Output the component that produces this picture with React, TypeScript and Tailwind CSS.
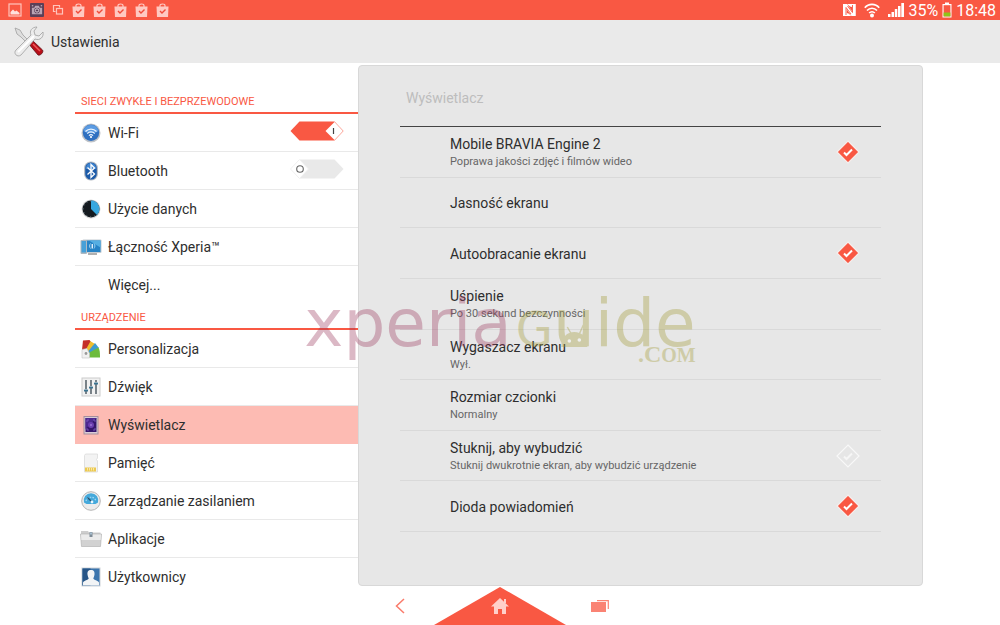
import { useState } from "react";
import type { ReactNode } from "react";
import clsx from "clsx";

interface SidebarItem {
  id: string;
  label: string;
  icon?: ReactNode;
  toggle?: boolean;
}

interface DisplayOption {
  id: string;
  title: string;
  summary?: string;
  checkable?: boolean;
}

/* ---------- Status bar icons ---------- */

function PictureIcon() {
  return (
    <svg width="14" height="14" viewBox="0 0 14 14">
      <rect x="1" y="1" width="12" height="12" fill="none" stroke="#ffc4bc" strokeWidth="1.2" />
      <path d="M2.500 11.500V9l2.500-2.500 2 2 1.500-1 3 2.500v1.500z" fill="#ffe0dc" />
    </svg>
  );
}

function CameraIcon() {
  return (
    <svg width="14" height="14" viewBox="0 0 15 15">
      <rect width="15" height="15" rx="1" fill="#5b3f58" />
      <path d="M2 5h2.500l1-2h4l1 2H13v7H2z" fill="#b9a3b3" />
      <circle cx="7.500" cy="8" r="3" fill="#5b3f58" />
      <circle cx="7.500" cy="8" r="1.800" fill="none" stroke="#e5d6df" />
      <path d="M2 3h1.500M11.500 3H13" stroke="#e5d6df" />
    </svg>
  );
}

function WindowsIcon() {
  return (
    <svg width="12" height="12" viewBox="0 0 12 12" fill="none" stroke="#ffc4bc" strokeWidth="1.200">
      <path d="M3.500 7.500h-2v-6h6v2" />
      <rect x="4.500" y="4.500" width="6" height="5.500" />
    </svg>
  );
}

function BagIcon() {
  return (
    <svg width="13" height="14" viewBox="0 0 13 14">
      <path d="M4 4V2.500C4 1.500 5 1 6.500 1S9 1.500 9 2.500V4" fill="none" stroke="#ffc9c2" strokeWidth="1.200" />
      <path d="M.5 3.500h12L12 14H1z" fill="#ffc9c2" />
      <path d="M4 8l2 2 3.500-3.500" fill="none" stroke="#f04a38" strokeWidth="1.400" />
    </svg>
  );
}

function NfcIcon() {
  return (
    <svg width="13" height="14" viewBox="0 0 13 14">
      <path d="M0 1h4l5 7V1h3.500v12h-4l-5-7v7H0z" fill="#fff" />
      <path d="M4 1h8.500v12H9V4L7 3.500zM0 1h3.500v9l2 .5 3 2.500H0z" fill="#fff" />
      <path d="M3 12V4.500l5 6.500M9.500 2v7.500L4.500 3" fill="none" stroke="#f95843" strokeWidth=".9" />
    </svg>
  );
}

function WifiStatusIcon() {
  return (
    <svg width="16" height="15" viewBox="0 0 16 15" fill="none" stroke="#fff" strokeWidth="1.700">
      <path d="M.8 4.800C4.500.3 11.500.3 15.200 4.800" />
      <path d="M3 7.500c2.800-3 7.200-3 10 0" />
      <path d="M5.200 10c1.600-1.700 4-1.700 5.600 0" />
      <circle cx="8" cy="12.600" r="2" fill="#fff" stroke="none" />
    </svg>
  );
}

function SignalIcon() {
  return (
    <svg width="16" height="14" viewBox="0 0 16 14" fill="#fff">
      <path d="M0 11h2.500v3H0zM3.500 9H6v5H3.500zM6.800 6h2.500v8H6.800zM10 3h2.500v11H10zM13.300 0H16v14h-2.700z" />
    </svg>
  );
}

function BatteryIcon() {
  return (
    <svg width="10" height="16" viewBox="0 0 10 16">
      <path d="M3 .5h4V2h2.500v13.500h-9V2H3z" fill="#fff" />
      <path d="M1.600 3.200h6.800v11.200H1.600z" fill="#f95843" />
      <path d="M1.600 10.500h6.800v3.900H1.600z" fill="#8fc31a" />
    </svg>
  );
}

/* ---------- Settings icons ---------- */

function ToolsIcon() {
  return (
    <svg width="32" height="32" viewBox="0 0 32 32">
      <path d="M2 2l5 2 3 5 8 8-2 2-8-8-4-3z" fill="#dedede" stroke="#a0a0a0" strokeWidth=".8" />
      <path d="M17 17l3-2 9.500 9c1.500 2-2 6-4.500 5l-7.500-9z" fill="#b80f18" stroke="#5e1015" strokeWidth=".8" />
      <path d="M20 18l7 7" stroke="#ef5a5a" strokeWidth="1.500" />
      <path
        d="M24 1c-5 0-8 4-6 8L3 24c-3 3 1 8 5 5l14-16c5 2 9-2 8-7l-4 4-4-1-1-4z"
        fill="#ececec"
        stroke="#a0a0a0"
        strokeWidth=".8"
      />
      <path d="M5 26L21 10" stroke="#fff" strokeWidth="2" />
    </svg>
  );
}

function WifiIcon() {
  return (
    <svg width="20" height="20" viewBox="0 0 20 20">
      <circle cx="10" cy="10" r="9.500" fill="#bfc3c8" />
      <circle cx="10" cy="9.800" r="8.200" fill="#2f70c0" />
      <path d="M2.500 8a7.700 7.700 0 0 1 15 0c-4 3-11 3-15 0z" fill="#5b9be2" />
      <g fill="none" stroke="#eaf4ff" strokeWidth="1.300">
        <path d="M4.500 8.500c3-3.300 8-3.300 11 0M6.300 10.600c2-2.200 5.400-2.200 7.400 0M8 12.600c1.200-1.200 2.800-1.200 4 0" />
      </g>
      <circle cx="10" cy="14" r="1.100" fill="#fff" />
    </svg>
  );
}

function BluetoothIcon() {
  return (
    <svg width="20" height="20" viewBox="0 0 20 20">
      <rect x="3" y=".5" width="14" height="19" rx="6.500" fill="#b9bec5" />
      <rect x="4.200" y="1.500" width="11.600" height="17" rx="5.500" fill="#1c5aa8" />
      <path d="M4.800 8c0-8 10.400-8 10.400 0z" fill="#3f84cf" />
      <path d="M6.500 6.500l7 6.500-3.500 3.500v-13L13.500 7l-7 6.500" fill="none" stroke="#fff" strokeWidth="1.300" />
    </svg>
  );
}

function DataUsageIcon() {
  return (
    <svg width="20" height="20" viewBox="0 0 20 20">
      <circle cx="10" cy="10" r="9.500" fill="#d8d8d8" />
      <circle cx="10" cy="10" r="8.500" fill="#151b20" />
      <path d="M10 10V1.500A8.500 8.500 0 0 1 16 16z" fill="#36a8e0" />
      <circle cx="10" cy="10" r="7.800" fill="none" stroke="#7e98a6" strokeWidth=".8" strokeDasharray="1 3" />
    </svg>
  );
}

function XperiaLinkIcon() {
  return (
    <svg width="22" height="20" viewBox="0 0 22 20">
      <path d="M8 15h9v3H8z" fill="#b0b0b0" />
      <rect x="2.500" y="2.500" width="19" height="13.500" rx="1" fill="#c4ccd2" />
      <rect x="3.500" y="3.500" width="17" height="11.500" fill="#2683c6" />
      <path d="M9 3.500h11.500v7z" fill="#55aee2" />
      <rect x=".5" y="3" width="6.500" height="14" rx="1" fill="#aeb9c2" />
      <rect x="1.500" y="4" width="4.500" height="11.500" fill="#46a0d8" />
      <path d="M10.500 6.500c-1.200 1.500-1.200 3.500 0 5M14 6.500c1.200 1.500 1.200 3.500 0 5" fill="none" stroke="#9ed4f3" />
      <rect x="11.600" y="7" width="1.300" height="4.500" fill="#f2faff" />
    </svg>
  );
}

function PersonalizationIcon() {
  return (
    <svg width="20" height="20" viewBox="0 0 20 20">
      <path d="M2 1.500L8.500 1 10 3 5 14l-4-3z" fill="#c42f28" />
      <path d="M9.500 2.200l5 3L6 16.500 4 12z" fill="#efbd2d" />
      <path d="M14 4l4 5-9 5.500-2-2z" fill="#3e9bd0" />
      <path d="M17.500 8.500c1.300 2.500 1.500 5 1.500 10H6.500v-4z" fill="#6dbb3c" />
      <path d="M1 10.500l5-1 2.500 5v4.500H1z" fill="#f1f1f1" stroke="#c3c3c3" strokeWidth=".6" />
      <circle cx="5" cy="14.500" r="1.400" fill="#9a9a9a" />
    </svg>
  );
}

function SoundIcon() {
  return (
    <svg width="20" height="20" viewBox="0 0 20 20">
      <rect x="1" y="1" width="18" height="18" fill="#f1f1f1" stroke="#cccccc" />
      <path d="M5 3v14M10 3v14M15 3v14" stroke="#46535c" strokeWidth="1.400" />
      <path d="M3 13.500h4M8 10.500h4M13 6.500h4" stroke="#3a7390" strokeWidth="2.200" />
      <path d="M3 12.500h4M8 9.500h4M13 5.500h4" stroke="#b9d0dc" strokeWidth=".6" />
    </svg>
  );
}

function DisplayIcon() {
  return (
    <svg width="20" height="20" viewBox="0 0 20 20">
      <rect x="3" y="1.500" width="14" height="17.500" fill="#d9ccd6" stroke="#a58f9d" />
      <rect x="4.500" y="3" width="11" height="14" fill="#35166d" />
      <path d="M4.500 3h11L4.500 14z" fill="#4d2a90" />
      <circle cx="10" cy="10" r="3" fill="#6b3fb0" />
      <circle cx="10" cy="10" r="1" fill="#9a74d4" />
      <path d="M6 7V5h2M12 5h2v2M14 13v2h-2M8 15H6v-2" fill="none" stroke="#8460c4" strokeWidth=".8" />
    </svg>
  );
}

function StorageIcon() {
  return (
    <svg width="20" height="20" viewBox="0 0 20 20">
      <path d="M4.500 1h12v4l-1 1.500 1 1.500v11H3.500V2.500z" fill="#f3f3f3" stroke="#dadada" strokeWidth=".8" />
      <path d="M4 14.500h11v4H4z" fill="#ecc94f" />
      <path d="M6.500 15v2.500M8.500 15v2.500M10.500 15v2.500M12.500 15v2.500" stroke="#f8e7a5" />
    </svg>
  );
}

function PowerIcon() {
  return (
    <svg width="20" height="20" viewBox="0 0 20 20">
      <circle cx="10" cy="10" r="9.300" fill="#ececec" stroke="#b5b5b5" />
      <path d="M3 11.500a7.300 7.300 0 1 1 14 0l-2.500 1.500h-9z" fill="#45a9db" />
      <path d="M5 10a5.200 5.200 0 0 1 10 0" fill="none" stroke="#a5daf4" strokeWidth="1.200" strokeDasharray="1.500 1.200" />
      <path d="M6.500 6.500l5 5" stroke="#24506e" strokeWidth="1.200" />
      <circle cx="11" cy="11" r="1.400" fill="#e9f7ff" />
    </svg>
  );
}

function AppsIcon() {
  return (
    <svg width="22" height="20" viewBox="0 0 22 20">
      <path d="M1 2h7l1 1.500h11.500V9H1z" fill="#cdcdcd" />
      <path d="M.5 5h21l-1 12.500H1.500z" fill="#d2d2d2" stroke="#b4b4b4" strokeWidth=".7" />
      <path d="M1 5.500h20l-.4 5.500H1.400z" fill="#ebebeb" />
      <rect x="9.500" y="3" width="3" height="5" fill="#7f8c97" />
      <rect x="10.300" y="3.500" width="1.400" height="2" fill="#b9d6ea" />
    </svg>
  );
}

function UsersIcon() {
  return (
    <svg width="20" height="20" viewBox="0 0 20 20">
      <rect x=".5" y=".5" width="19" height="19" fill="#cfd3d7" />
      <rect x="1.500" y="1.500" width="17" height="17" fill="#3a74ad" />
      <path d="M1.500 1.500h8v17h-8z" fill="#265587" />
      <path
        d="M10 3c3 0 3.800 2 3.500 4.500-.2 2-1 3-1.200 4 .5 1.800 4.700 1.800 5.700 4v3H2v-3c1-2.200 5.200-2.200 5.700-4-.2-1-1-2-1.200-4C6.200 5 7 3 10 3z"
        fill="#f2f4f6"
      />
    </svg>
  );
}

const networkItems: SidebarItem[] = [
  { id: "wifi", label: "Wi-Fi", icon: <WifiIcon />, toggle: true },
  { id: "bluetooth", label: "Bluetooth", icon: <BluetoothIcon />, toggle: true },
  { id: "data", label: "Użycie danych", icon: <DataUsageIcon /> },
  { id: "xperia", label: "Łączność Xperia™", icon: <XperiaLinkIcon /> },
  { id: "more", label: "Więcej..." },
];

const deviceItems: SidebarItem[] = [
  { id: "personalization", label: "Personalizacja", icon: <PersonalizationIcon /> },
  { id: "sound", label: "Dźwięk", icon: <SoundIcon /> },
  { id: "display", label: "Wyświetlacz", icon: <DisplayIcon /> },
  { id: "storage", label: "Pamięć", icon: <StorageIcon /> },
  { id: "power", label: "Zarządzanie zasilaniem", icon: <PowerIcon /> },
  { id: "apps", label: "Aplikacje", icon: <AppsIcon /> },
  { id: "users", label: "Użytkownicy", icon: <UsersIcon /> },
];

const displayOptions: DisplayOption[] = [
  { id: "bravia", title: "Mobile BRAVIA Engine 2", summary: "Poprawa jakości zdjęć i filmów wideo", checkable: true },
  { id: "brightness", title: "Jasność ekranu" },
  { id: "rotate", title: "Autoobracanie ekranu", checkable: true },
  { id: "sleep", title: "Uśpienie", summary: "Po 30 sekund bezczynności" },
  { id: "screensaver", title: "Wygaszacz ekranu", summary: "Wył." },
  { id: "font", title: "Rozmiar czcionki", summary: "Normalny" },
  { id: "wake", title: "Stuknij, aby wybudzić", summary: "Stuknij dwukrotnie ekran, aby wybudzić urządzenie", checkable: true },
  { id: "led", title: "Dioda powiadomień", checkable: true },
];

interface ToggleProps {
  id: string;
  checked: boolean;
  onChange: () => void;
}

function Switch({ id, checked, onChange }: ToggleProps) {
  return (
    <span className="mb-1 grid h-5 w-[54px] shrink-0">
      <svg viewBox="0 0 54 20" className="pointer-events-none col-start-1 row-start-1">
        {checked ? (
          <>
            <path d="M.5 10L9.500.5h35l9 9.500-9 9.500h-35z" fill="#f95843" />
            <path d="M35.500 10l9-9 8.500 9-8.500 9z" fill="#fff" />
            <path d="M43.500 7v6" stroke="#444" strokeWidth="1.200" />
          </>
        ) : (
          <>
            <path d="M10 .5h34.500l9 9.500-9 9.500H10z" fill="#e9e9e9" />
            <path d="M.5 10l9-9.500 9 9.500-9 9.500z" fill="#fff" stroke="#f0f0f0" />
            <circle cx="10" cy="10" r="3.300" fill="none" stroke="#666" strokeWidth="1.100" />
          </>
        )}
      </svg>
      <input
        id={id}
        type="checkbox"
        role="switch"
        checked={checked}
        onChange={onChange}
        className="col-start-1 row-start-1 cursor-pointer appearance-none"
      />
    </span>
  );
}

function DiamondCheckbox({ id, checked, onChange }: ToggleProps) {
  return (
    <span className="grid size-6 shrink-0">
      <svg viewBox="0 0 24 24" className="pointer-events-none col-start-1 row-start-1">
        <path
          d="M12 1l11 11-11 11L1 12z"
          fill={checked ? "#f95843" : "#e6e6e6"}
          stroke={checked ? "#f6eeec" : "#f8f8f8"}
          strokeWidth="1.200"
        />
        <path d="M8 12.500l2.500 2.500 5.500-5.500" fill="none" stroke={checked ? "#fff" : "#f6f6f6"} strokeWidth="2" />
      </svg>
      <input
        id={id}
        type="checkbox"
        checked={checked}
        onChange={onChange}
        className="col-start-1 row-start-1 cursor-pointer appearance-none"
      />
    </span>
  );
}

function StatusBar() {
  return (
    <div className="flex h-5 items-center justify-between bg-[#f95843] pr-1 pl-2 text-white">
      <div className="flex items-center gap-2">
        <PictureIcon />
        <CameraIcon />
        <WindowsIcon />
        {[0, 1, 2, 3, 4].map((n) => (
          <BagIcon key={n} />
        ))}
      </div>
      <div className="flex items-center gap-1 text-base leading-5">
        <div className="flex items-center gap-2">
          <NfcIcon />
          <WifiStatusIcon />
          <SignalIcon />
        </div>
        <span className="pt-0.5">35%</span>
        <BatteryIcon />
        <span className="pt-0.5">18:48</span>
      </div>
    </div>
  );
}

function Watermark() {
  return (
    <div
      className="pointer-events-none absolute top-[226px] left-1/2 flex -translate-x-1/2 flex-col items-end whitespace-nowrap opacity-35"
      style={{ fontFamily: '"DejaVu Sans", sans-serif' }}
    >
      <div className="flex items-baseline gap-1 text-[66px] leading-[70px]">
        <span className="text-[#9b375c]">xperia</span>
        <span className="flex items-baseline text-[#a09a32]">
          <span className="text-[48px]">G</span>
          <span className="relative">
            uide
            <svg width="30" height="26" viewBox="0 0 30 26" className="absolute top-[34px] left-[6px]">
              <path d="M2 24C2 14 8 9 15 9s13 5 13 15z" fill="#a09a32" />
              <path d="M8 4l4 7M24 2l-4 9" stroke="#a09a32" strokeWidth="1.500" />
              <circle cx="10" cy="18" r="1.800" fill="#fff" />
              <circle cx="20" cy="17" r="1.800" fill="#fff" />
            </svg>
          </span>
        </span>
      </div>
      <span
        className="-mt-5 text-2xl leading-5 font-bold text-[#a09a32]"
        style={{ fontFamily: '"Liberation Serif", serif' }}
      >
        .C<span className="text-xl leading-5">OM</span>
      </span>
    </div>
  );
}

export default function App() {
  const [selected, setSelected] = useState("display");
  const [enabled, setEnabled] = useState<Record<string, boolean>>({
    wifi: true,
    bravia: true,
    rotate: true,
    led: true,
  });

  const toggle = (id: string) => setEnabled((prev) => ({ ...prev, [id]: !prev[id] }));

  const renderSection = (heading: string, items: SidebarItem[]) => (
    <section>
      <h2 className="h-[26px] border-b-2 border-[#f95843] px-1.5 pt-1 text-[11px] leading-5 text-[#f95843]">
        {heading}
      </h2>
      <ul>
        {items.map((item, idx) => (
          <li
            key={item.id}
            className={clsx(
              "flex h-[38px] items-center border-b pr-[14px]",
              item.id === selected ? "bg-[#fdbbb3]" : "",
              idx === items.length - 1 || item.id === selected ? "border-transparent" : "border-[#e9e9e9]"
            )}
          >
            {item.toggle ? (
              <>
                <label htmlFor={item.id} className="flex flex-1 items-center gap-1.5 pl-1">
                  <span className="flex w-[23px] justify-center">{item.icon}</span>
                  {item.label}
                </label>
                <Switch id={item.id} checked={!!enabled[item.id]} onChange={() => toggle(item.id)} />
              </>
            ) : (
              <button
                type="button"
                onClick={() => setSelected(item.id)}
                className="flex h-full flex-1 items-center gap-1.5 pl-1 text-left"
              >
                <span className="flex w-[23px] justify-center">{item.icon}</span>
                {item.label}
              </button>
            )}
          </li>
        ))}
      </ul>
    </section>
  );

  return (
    <div
      className="flex min-h-screen flex-col bg-white text-sm text-[#2e2e2e]"
      style={{ fontFamily: "Roboto, sans-serif" }}
    >
      <StatusBar />

      <header className="flex h-[43px] items-center gap-1.5 bg-[#eaeaea] pl-[13px]">
        <ToolsIcon />
        <h1>Ustawienia</h1>
      </header>

      <main className="relative flex flex-1 pr-[77px] pl-[75px]">
        {/* The list runs on a little under the system bar */}
        <nav className="-mb-3 w-[283px] shrink-0 pt-[25px]">
          {renderSection("SIECI ZWYKŁE I BEZPRZEWODOWE", networkItems)}
          {renderSection("URZĄDZENIE", deviceItems)}
        </nav>

        <section className="mt-0.5 flex-1 rounded-sm border border-[#d8d8d8] bg-[#e7e7e7] px-[41px] pb-[53px]">
          <h2 className="h-[61px] border-b border-[#444444] px-1.5 pt-[22px] text-[#bdbdbd]">Wyświetlacz</h2>
          <ul className="grid min-h-[405px] auto-rows-fr">
            {displayOptions.map((option) => (
              <li key={option.id} className="flex items-center border-b border-[#d9d9d9] pr-[21px] pl-[50px]">
                <label htmlFor={option.checkable ? option.id : undefined} className="flex-1 pt-px">
                  <span className="block leading-5">{option.title}</span>
                  {option.summary && <span className="block text-[11px] leading-4 text-[#666666]">{option.summary}</span>}
                </label>
                {option.checkable && (
                  <DiamondCheckbox id={option.id} checked={!!enabled[option.id]} onChange={() => toggle(option.id)} />
                )}
              </li>
            ))}
          </ul>
        </section>

        <Watermark />
      </main>

      {/* System navigation */}
      <footer className="flex h-[39px] shrink-0 items-center justify-center">
        <button type="button" aria-label="Wstecz" className="flex h-full w-[68px] items-center justify-center">
          <svg width="10" height="16" viewBox="0 0 10 16" fill="none" stroke="#fa7b6b" strokeWidth="1.500">
            <path d="M9 1L1.500 8 9 15" />
          </svg>
        </button>
        <button type="button" aria-label="Ekran główny" className="h-full w-[132px]">
          <svg width="132" height="39" viewBox="0 0 132 39">
            <path d="M66 1l66 38H0z" fill="#f95843" />
            <path d="M66 12l9 8.500h-3V28h-4v-5h-4v5h-4v-7.500h-3z" fill="#ffd0ca" />
            <path d="M70 13h2v4h-2z" fill="#ffd0ca" />
          </svg>
        </button>
        <button type="button" aria-label="Ostatnie aplikacje" className="flex h-full w-[68px] items-center justify-center">
          <svg width="18" height="12" viewBox="0 0 18 12">
            <path d="M0 2h15v10H0z" fill="#fa8374" />
            <path d="M6 .7h11.300V9" fill="none" stroke="#fa8374" strokeWidth="1.200" />
          </svg>
        </button>
      </footer>
    </div>
  );
}
